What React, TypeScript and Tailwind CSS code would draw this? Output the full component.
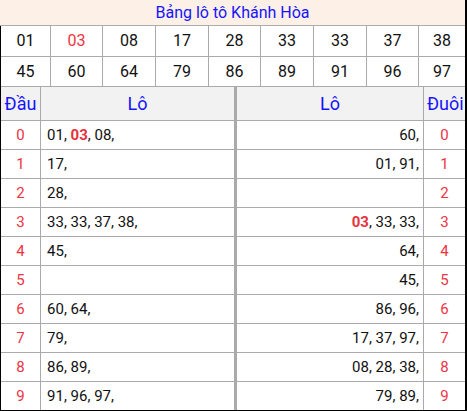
import React from 'react';

const top = [
  ['01', '03', '08', '17', '28', '33', '33', '37', '38'],
  ['45', '60', '64', '79', '86', '89', '91', '96', '97'],
];

const dau: string[][] = [
  ['01', '03', '08'],
  ['17'],
  ['28'],
  ['33', '33', '37', '38'],
  ['45'],
  [],
  ['60', '64'],
  ['79'],
  ['86', '89'],
  ['91', '96', '97'],
];

const duoi: string[][] = [
  ['60'],
  ['01', '91'],
  [],
  ['03', '33', '33'],
  ['64'],
  ['45'],
  ['86', '96'],
  ['17', '37', '97'],
  ['08', '28', '38'],
  ['79', '89'],
];

const special = '03';

const Nums: React.FC<{ list: string[] }> = ({ list }) => (
  <span className="whitespace-pre">
    {list.map((n, i) => (
      <React.Fragment key={i}>
        <span className={n === special ? 'font-bold text-[#e8323c]' : ''}>{n}</span>
        {','}
        {i < list.length - 1 ? ' ' : ''}
      </React.Fragment>
    ))}
  </span>
);

export default function App() {
  return (
    <div className="w-[467px] font-['Roboto','Liberation_Sans',sans-serif] text-[#111] border-r-2 border-b-2 border-black bg-white">
      {/* Title */}
      <div className="h-[26px] bg-[#fdf0e6] border-b border-[#aaa] flex items-center justify-center text-[16px] text-[#1515ff]">
        Bảng lô tô Khánh Hòa
      </div>

      <div className="border-l border-black">
        {/* Drawn numbers */}
        {top.map((row, r) => (
          <div
            key={r}
            className={`grid grid-cols-[50px_52px_53px_53px_52px_53px_53px_52px_1fr] border-b border-[#aaa] ${r === 0 ? 'h-[31px]' : 'h-[30px]'}`}
          >
            {row.map((n, i) => (
              <div
                key={i}
                className={`flex items-center justify-center text-[16px] ${i < 8 ? 'border-r border-[#aaa]' : ''} ${r === 0 && i === 1 ? 'text-[#ee3344]' : ''}`}
              >
                {n}
              </div>
            ))}
          </div>
        ))}

        {/* Head / tail header */}
        <div className="flex h-[34px] bg-[#f2f2f2] border-b border-[#aaa] text-[18px] text-[#1515ff]">
          <div className="w-[40px] border-r border-[#aaa] flex items-center justify-center whitespace-nowrap">Đầu</div>
          <div className="w-[196px] border-r-[3px] border-[#aaa] flex items-center justify-center">Lô</div>
          <div className="w-[187px] border-r border-[#aaa] flex items-center justify-center">Lô</div>
          <div className="flex-1 flex items-center justify-start pl-[3px] whitespace-nowrap overflow-hidden">Đuôi</div>
        </div>

        {dau.map((list, d) => (
          <div
            key={d}
            className={`flex text-[15px] ${d < 9 ? 'h-[29px] border-b border-[#aaa]' : 'h-[28px]'}`}
          >
            <div className="w-[40px] border-r border-[#aaa] flex items-center justify-center text-[#ee3344]">{d}</div>
            <div className="w-[196px] border-r-[3px] border-[#aaa] flex items-center pl-[6px]">
              <Nums list={list} />
            </div>
            <div className="w-[187px] border-r border-[#aaa] flex items-center justify-end pr-[4px]">
              <Nums list={duoi[d]} />
            </div>
            <div className="flex-1 flex items-center justify-center text-[#ee3344]">{d}</div>
          </div>
        ))}
      </div>
    </div>
  );
}
